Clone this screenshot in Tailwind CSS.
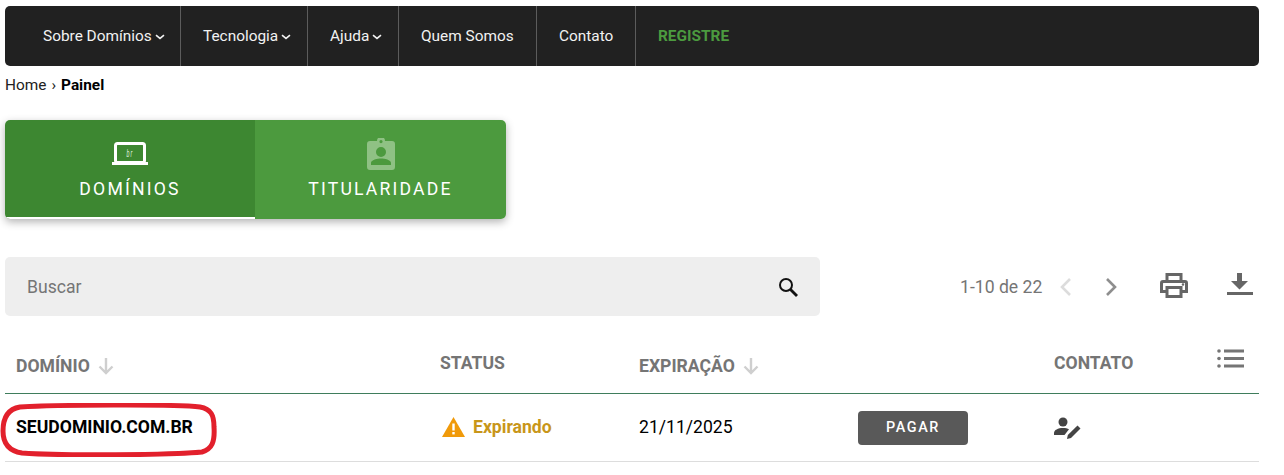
<!DOCTYPE html>
<html lang="pt-BR">
<head>
  <meta charset="UTF-8" />
  <title>Painel</title>
  <script src="https://cdn.jsdelivr.net/npm/@tailwindcss/browser@4"></script>
</head>
<body class="bg-white font-['Roboto',sans-serif] overflow-hidden">
  <div class="w-[1254px] ml-[5px] pt-[6px]">
    <!-- menu -->
    <nav class="h-[60px] bg-[#212121] rounded-[5px] flex items-stretch text-[15.4px] text-[#f2f2f2]">
      <a class="w-[176px] pl-[38px] pt-[1px] border-r border-[#5c5c5c] flex items-center gap-[3px]">Sobre Domínios
        <svg width="10" height="6" viewBox="0 0 10 6" fill="none" stroke="#f2f2f2" stroke-width="1.6"><path d="M1 1.2 5 4.4 9 1.2"/></svg></a>
      <a class="w-[127px] pl-[22px] pt-[1px] border-r border-[#5c5c5c] flex items-center gap-[3px]">Tecnologia
        <svg width="10" height="6" viewBox="0 0 10 6" fill="none" stroke="#f2f2f2" stroke-width="1.6"><path d="M1 1.2 5 4.4 9 1.2"/></svg></a>
      <a class="w-[91px] pl-[22px] pt-[1px] border-r border-[#5c5c5c] flex items-center gap-[3px]">Ajuda
        <svg width="10" height="6" viewBox="0 0 10 6" fill="none" stroke="#f2f2f2" stroke-width="1.6"><path d="M1 1.2 5 4.4 9 1.2"/></svg></a>
      <a class="w-[138px] pl-[22px] pt-[1px] border-r border-[#5c5c5c] flex items-center">Quem Somos</a>
      <a class="w-[99px] pl-[22px] pt-[1px] border-r border-[#5c5c5c] flex items-center">Contato</a>
      <a class="pl-[22px] pt-[1px] flex items-center font-bold text-[#4c9a3f]">REGISTRE</a>
    </nav>

    <!-- breadcrumb -->
    <div class="h-[38px] pt-[10px] text-[15.4px] leading-[18px] text-[#222] flex gap-[5px]">
      <span>Home</span><span>›</span><span class="font-bold text-black">Painel</span>
    </div>

    <!-- tabs -->
    <div class="mt-[16px] w-[501px] h-[99px] flex rounded-[5px] overflow-hidden shadow-[0_3px_8px_rgba(0,0,0,0.3)] text-white text-[17.6px] tracking-[2.2px]">
      <div class="w-[250px] bg-[#3d8731] border-b-2 border-white flex flex-col items-center pt-[22px]">
        <svg width="36" height="24" viewBox="0 0 36 24" class="block">
          <rect x="3.500" y="1.500" width="29" height="19" rx="2" fill="none" stroke="#fff" stroke-width="3"/>
          <rect x="0" y="20" width="36" height="3" fill="#fff"/>
          <text x="18" y="15" text-anchor="middle" font-size="11" font-family="Roboto" font-style="italic" fill="#dfeadc" textLength="7" lengthAdjust="spacingAndGlyphs">br</text>
        </svg>
        <span class="mt-[11px] leading-[24px]">DOMÍNIOS</span>
      </div>
      <div class="flex-1 bg-[#4c9a3e] flex flex-col items-center pt-[18px]">
        <svg width="28" height="32" viewBox="0 0 28 32" class="block" fill="#8fc184">
          <path fill-rule="evenodd" d="M3 3h7a4 4 0 0 1 8 0h7a3 3 0 0 1 3 3v23a3 3 0 0 1-3 3H3a3 3 0 0 1-3-3V6a3 3 0 0 1 3-3ZM14 2a1.600 1.600 0 1 0 0 3.200A1.600 1.600 0 0 0 14 2Zm0 7a5 5 0 1 0 0 10 5 5 0 0 0 0-10ZM4 27h20v-2c0-3.300-6.500-4.500-10-4.500S4 21.700 4 25Z"/>
        </svg>
        <span class="mt-[7px] leading-[24px]">TITULARIDADE</span>
      </div>
    </div>

    <!-- busca -->
    <div class="mt-[38px] h-[59px] flex items-center">
      <div class="w-[815px] h-full bg-[#eeeeee] rounded-[5px] flex items-center justify-between pl-[22px] pr-[21px]">
        <span class="pt-[1px] text-[17.6px] text-[#757575]">Buscar</span>
        <svg width="22" height="22" viewBox="0 0 22 22" fill="none" stroke="#111" stroke-width="2"><circle cx="9" cy="9" r="6"/><path d="m13.500 13.500 6.500 6.500" stroke-width="2.800"/></svg>
      </div>
      <span class="ml-[140px] pt-[1px] text-[17.6px] text-[#757575]">1-10 de 22</span>
      <svg class="ml-[15px]" width="18" height="22" viewBox="0 0 18 22" fill="none" stroke="#dcdcdc" stroke-width="2.600"><path d="M13 3 5 11l8 8"/></svg>
      <svg class="ml-[27px]" width="18" height="22" viewBox="0 0 18 22" fill="none" stroke="#8e8e8e" stroke-width="2.600"><path d="m5 3 8 8-8 8"/></svg>
      <svg class="ml-[40px] mt-[-3px]" width="28" height="26" viewBox="0 0 28 26" fill="#666"><path fill-rule="evenodd" d="M5.500 1h17v7H25a3 3 0 0 1 3 3v10h-5.500v5h-17v-5H0V11a3 3 0 0 1 3-3h2.500Zm3 3v4h11V4ZM8.500 17v6h11v-6ZM3.500 11a.5.5 0 0 0-.5.500v6.500h2.500v-4h17v4H25v-6.500a.5.5 0 0 0-.5-.5Zm19.500.2a1.300 1.300 0 1 0 0 2.600 1.300 1.300 0 0 0 0-2.600Z"/></svg>
      <svg class="ml-[39px] mt-[-5px]" width="26" height="24" viewBox="0 0 26 24" fill="#666"><path d="M10 1h5v8h6l-8.500 8.500L4 9h6Z"/><rect x="0" y="20" width="26" height="3"/></svg>
    </div>

    <!-- tabela -->
    <div class="mt-[29px] h-[49px] grid grid-cols-[435px_199px_219px_195px_1fr] border-b border-[#3f7d5c] text-[17.6px] font-bold text-[#757575]">
      <div class="pl-[11px] pt-[8px] flex items-start gap-[8px]">DOMÍNIO
        <svg class="mt-[4px]" width="16" height="18" viewBox="0 0 16 18" fill="none" stroke="#cfcfcf" stroke-width="2.400"><path d="M8 1v15M1.500 9.500 8 16l6.500-6.500"/></svg></div>
      <div class="pt-[5px]">STATUS</div>
      <div class="pt-[8px] flex items-start gap-[8px]">EXPIRAÇÃO
        <svg class="mt-[4px]" width="16" height="18" viewBox="0 0 16 18" fill="none" stroke="#cfcfcf" stroke-width="2.400"><path d="M8 1v15M1.500 9.500 8 16l6.500-6.500"/></svg></div>
      <div></div>
      <div class="pt-[5px] pl-[1px] flex justify-between pr-[15px]">CONTATO
        <svg class="mt-[-2px]" width="27" height="22" viewBox="0 0 27 22" fill="#757575"><circle cx="2" cy="3" r="1.800"/><circle cx="2" cy="10.500" r="1.800"/><circle cx="2" cy="18" r="1.800"/><rect x="7" y="1.500" width="20" height="3"/><rect x="7" y="9" width="20" height="3"/><rect x="7" y="16.500" width="20" height="3"/></svg></div>
    </div>
    <div class="h-[68px] grid grid-cols-[435px_199px_219px_195px_1fr] items-center border-b border-[#dddddd] text-[17.6px]">
      <div class="pl-[11px] font-bold text-black relative">SEUDOMINIO.COM.BR
        <svg class="absolute left-[-5px] top-[-11px]" width="217" height="54" viewBox="0 0 217 54" fill="none" stroke="#e2202c" stroke-width="5"><path d="M20 4C55 2 175 1 200 4 211 6 214 12 214 24 215 39 212 46 202 49 172 52 62 53 22 50 9 48 3 40 3 28 3 14 8 6 20 4Z"/></svg>
      </div>
      <div class="flex items-center gap-[8px] pl-[2px] font-bold text-[#c8961a]">
        <svg width="23" height="20" viewBox="0 0 23 20"><path d="M11.500 0 23 20H0Z" fill="#f09a0a"/><rect x="10.300" y="6.500" width="2.400" height="7" fill="#fff"/><rect x="10.300" y="15" width="2.400" height="2.400" fill="#fff"/></svg>
        Expirando
      </div>
      <div class="text-black">21/11/2025</div>
      <div><button class="w-[110px] h-[34px] bg-[#595959] rounded-[4px] text-white text-[14.4px] font-medium tracking-[1.600px]">PAGAR</button></div>
      <div class="pl-[1px]">
        <svg width="28" height="24" viewBox="0 0 28 24" fill="#444"><circle cx="9" cy="6" r="4.500"/><path d="M0 19v-2c0-3 4-5 9-5 2.500 0 4.500.5 6 1.300L10.500 19Z"/><path d="m13 23 .8-4L23.500 9.500l3 3L17 22Z"/></svg>
      </div>
    </div>
  </div>
</body>
</html>
